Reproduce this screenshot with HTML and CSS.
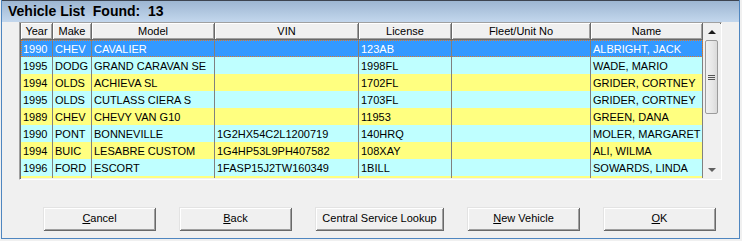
FILE: index.html
```html
<!DOCTYPE html>
<html lang="en">
<head>
    <meta charset="UTF-8">
    <title>Vehicle List</title>
    <link rel="stylesheet" href="styles.css">
</head>
<body>
    <div class="window">
        <!-- title -->
        <div class="titlebar">Vehicle List&nbsp;&nbsp;Found:&nbsp;&nbsp;13</div>

        <div class="client">
            <!-- list -->
            <div class="grid">
                <div class="grid-main">
                    <div class="row head">
                        <div class="hcell">Year</div>
                        <div class="hcell">Make</div>
                        <div class="hcell">Model</div>
                        <div class="hcell">VIN</div>
                        <div class="hcell">License</div>
                        <div class="hcell">Fleet/Unit No</div>
                        <div class="hcell">Name</div>
                    </div>
                    <div class="rows">
                        <div class="row selected">
                            <div class="cell">1990</div><div class="cell">CHEV</div><div class="cell">CAVALIER</div><div class="cell"></div><div class="cell">123AB</div><div class="cell"></div><div class="cell">ALBRIGHT, JACK</div>
                        </div>
                        <div class="row cyan">
                            <div class="cell">1995</div><div class="cell">DODG</div><div class="cell">GRAND CARAVAN SE</div><div class="cell"></div><div class="cell">1998FL</div><div class="cell"></div><div class="cell">WADE, MARIO</div>
                        </div>
                        <div class="row yellow">
                            <div class="cell">1994</div><div class="cell">OLDS</div><div class="cell">ACHIEVA SL</div><div class="cell"></div><div class="cell">1702FL</div><div class="cell"></div><div class="cell">GRIDER, CORTNEY</div>
                        </div>
                        <div class="row cyan">
                            <div class="cell">1995</div><div class="cell">OLDS</div><div class="cell">CUTLASS CIERA S</div><div class="cell"></div><div class="cell">1703FL</div><div class="cell"></div><div class="cell">GRIDER, CORTNEY</div>
                        </div>
                        <div class="row yellow">
                            <div class="cell">1989</div><div class="cell">CHEV</div><div class="cell">CHEVY VAN G10</div><div class="cell"></div><div class="cell">11953</div><div class="cell"></div><div class="cell">GREEN, DANA</div>
                        </div>
                        <div class="row cyan">
                            <div class="cell">1990</div><div class="cell">PONT</div><div class="cell">BONNEVILLE</div><div class="cell">1G2HX54C2L1200719</div><div class="cell">140HRQ</div><div class="cell"></div><div class="cell">MOLER, MARGARET</div>
                        </div>
                        <div class="row yellow">
                            <div class="cell">1994</div><div class="cell">BUIC</div><div class="cell">LESABRE CUSTOM</div><div class="cell">1G4HP53L9PH407582</div><div class="cell">108XAY</div><div class="cell"></div><div class="cell">ALI, WILMA</div>
                        </div>
                        <div class="row cyan">
                            <div class="cell">1996</div><div class="cell">FORD</div><div class="cell">ESCORT</div><div class="cell">1FASP15J2TW160349</div><div class="cell">1BILL</div><div class="cell"></div><div class="cell">SOWARDS, LINDA</div>
                        </div>
                        <div class="row yellow">
                            <div class="cell"></div><div class="cell"></div><div class="cell"></div><div class="cell"></div><div class="cell"></div><div class="cell"></div><div class="cell"></div>
                        </div>
                    </div>
                </div>

                <!-- scrollbar -->
                <div class="scrollbar">
                    <div class="arrow"><span class="tri up"></span></div>
                    <div class="track"><div class="thumb"><span class="grip"></span></div></div>
                    <div class="arrow"><span class="tri down"></span></div>
                </div>
            </div>

            <!-- buttons -->
            <div class="buttons">
                <div class="btn"><u>C</u>ancel</div>
                <div class="btn"><u>B</u>ack</div>
                <div class="btn wide">Central Service Lookup</div>
                <div class="btn"><u>N</u>ew Vehicle</div>
                <div class="btn"><u>O</u>K</div>
            </div>
        </div>
    </div>
</body>
</html>
```

FILE: styles.css
```css
/* page */
body {
    margin: 0;
    background: #f0f0f0;
    font-family: "Liberation Sans", Arial, sans-serif;
    font-size: 11px;
    color: #000;
}

/* window frame */
.window {
    width: 737px;
    height: 238px;
    margin-left: 1px;
    border: 1px solid #4f86c0;
    border-top: none;
    background: #f0f0f0;
    display: flex;
    flex-direction: column;
}

.titlebar {
    height: 21px;
    border-top: 1px solid #3d4450;
    background: linear-gradient(#9db6d2, #c3d7ed);
    font-size: 14px;
    font-weight: bold;
    line-height: 21px;
    padding-left: 6px;
    white-space: nowrap;
}

.client {
    flex: 1;
    padding-left: 17px;
}

/* list box */
.grid {
    width: 700px;
    display: flex;
    border-top: 1px solid #a0a0a0;
    border-left: 1px solid #a0a0a0;
    border-right: 1px solid #ffffff;
    border-bottom: 1px solid #ffffff;
    box-shadow: inset 1px 1px 0 #696969;
    padding: 0 0 1px 1px;
}

.grid-main {
    width: 682px;
}

.row {
    display: grid;
    grid-template-columns: 32px 39px 123px 144px 93px 139px 112px;
    height: 17px;
}

.head .hcell {
    background: #f0f0f0;
    text-align: center;
    line-height: 16px;
    box-shadow: inset 1px 1px 0 #ffffff, inset -1px -1px 0 #a0a0a0;
    border-right: 1px solid #696969;
    border-bottom: 1px solid #696969;
    box-sizing: border-box;
}

.rows {
    height: 138px;
    overflow: hidden;
}

.cell {
    border-right: 1px solid #808080;
    padding-left: 2px;
    line-height: 18px;
    white-space: nowrap;
    overflow: hidden;
}

.cyan {
    background: #bfffff;
}

.yellow {
    background: #ffff80;
}

.selected {
    background: #3399ff;
    color: #ffffff;
    position: relative;
}

/* focus rectangle */
.selected::after {
    content: "";
    position: absolute;
    left: 0;
    top: 0;
    right: 0;
    bottom: 0;
    border: 1px dotted #e07a2a;
}

/* scrollbar */
.scrollbar {
    width: 17px;
    background: #f0f0f0;
    display: flex;
    flex-direction: column;
}

.arrow {
    height: 17px;
    display: flex;
    align-items: center;
    justify-content: center;
}

.tri {
    width: 0;
    height: 0;
    border-left: 4px solid transparent;
    border-right: 4px solid transparent;
}

.tri.up {
    border-bottom: 4px solid #1a1a1a;
}

.tri.down {
    border-top: 4px solid #606060;
}

.track {
    flex: 1;
    padding: 0 1px;
}

.thumb {
    height: 72px;
    margin: 0 1px;
    border: 1px solid #9b9b9b;
    border-radius: 2px;
    background: linear-gradient(90deg, #f1f1f1, #e6e6e6 60%, #dadada);
    display: flex;
    align-items: center;
    justify-content: center;
}

.grip {
    width: 7px;
    height: 5px;
    background: repeating-linear-gradient(#555 0 1px, transparent 1px 2px);
}

/* buttons */
.buttons {
    display: flex;
    gap: 23px;
    padding-left: 24px;
    margin-top: 27px;
}

.btn {
    width: 113px;
    height: 24px;
    line-height: 23px;
    text-align: center;
    background: #f0f0f0;
    box-sizing: border-box;
    box-shadow: inset 1px 1px 0 #e3e3e3, inset -1px -1px 0 #696969,
        inset 2px 2px 0 #ffffff, inset -2px -2px 0 #a0a0a0;
}

.btn.wide {
    width: 129px;
}

.btn u {
    text-decoration: underline;
}
```
